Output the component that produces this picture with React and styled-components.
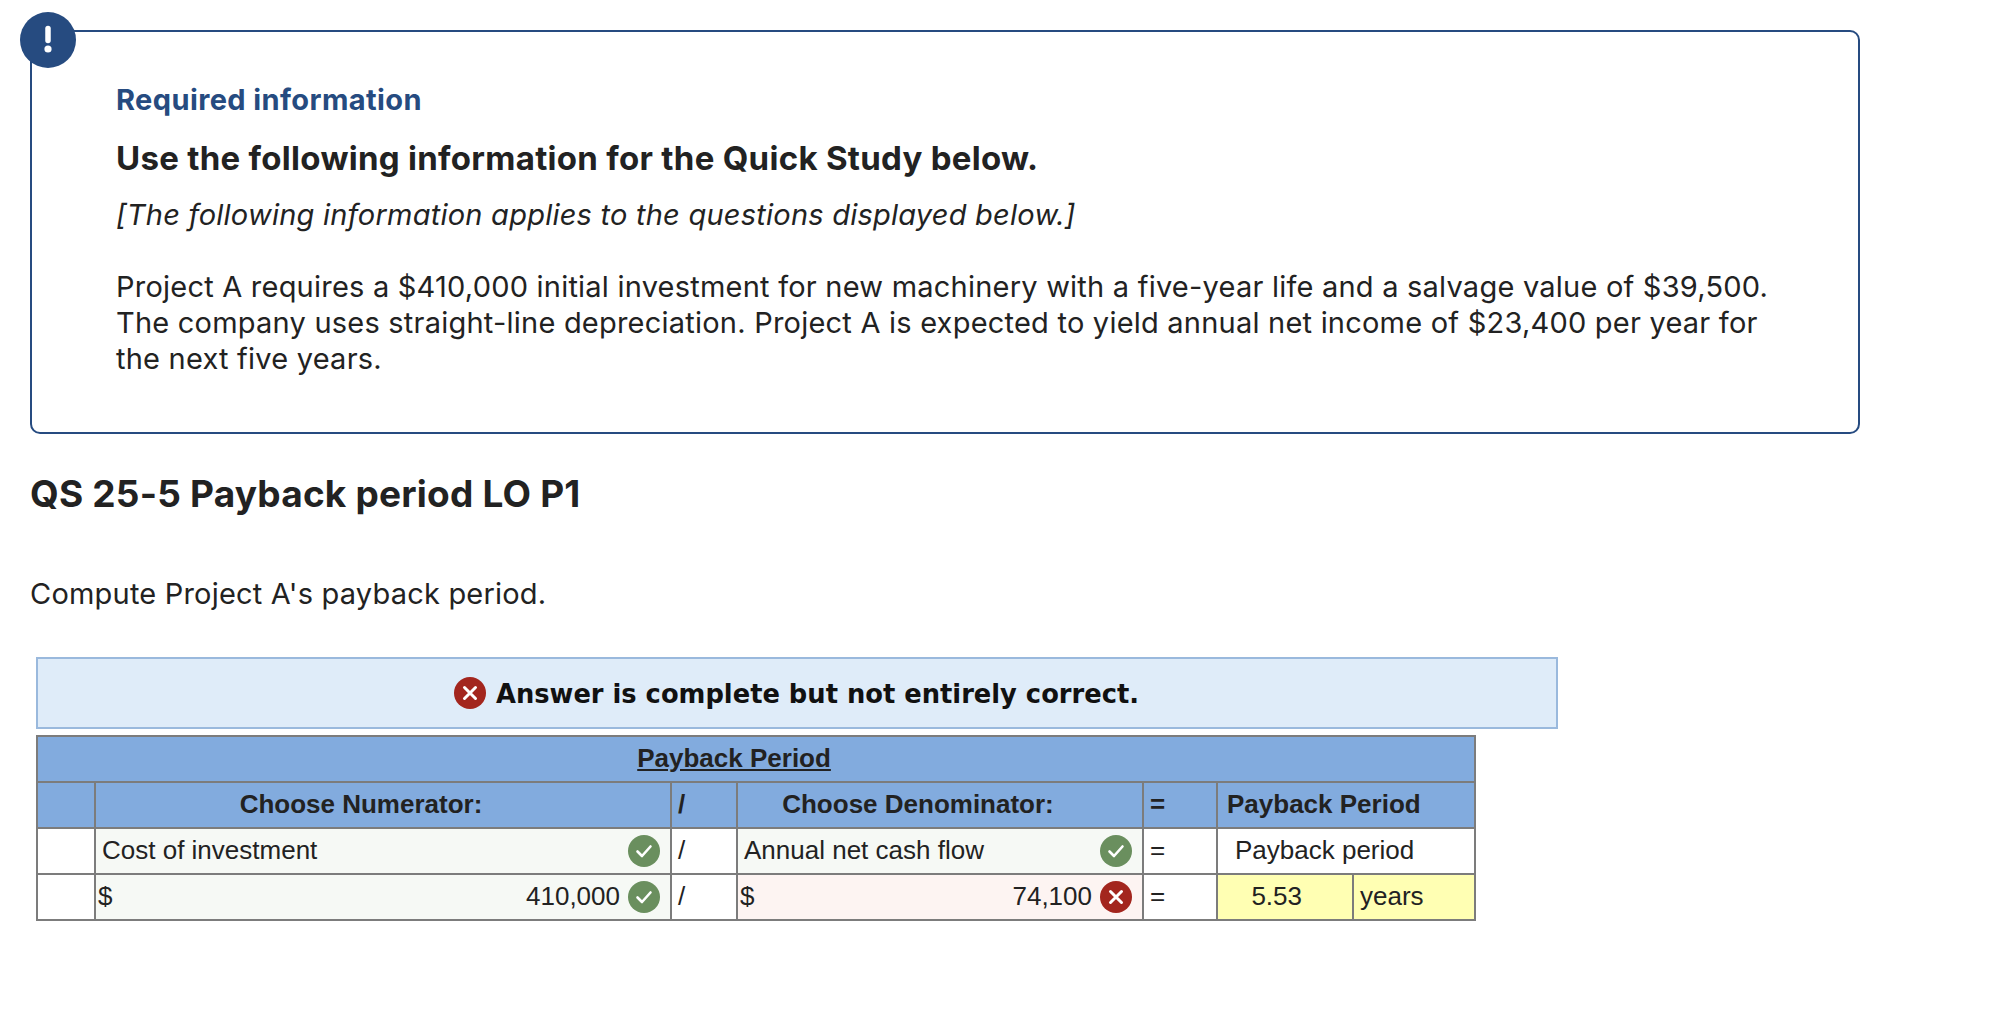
import React from "react";
import styled, { createGlobalStyle } from "styled-components";

const Global = createGlobalStyle`
  html, body { margin: 0; padding: 0; background: #fff; }
`;
const SANS = `"Inter", "Noto Sans", sans-serif`;
const ARIAL = `"Liberation Sans", Arial, sans-serif`;
const Page = styled.div`
  padding: 30px 0 0 30px;
  width: 1964px;
  height: 984px;
  color: #222;
  font-family: ${SANS};
`;
const InfoBox = styled.section`
  position: relative;
  box-sizing: border-box;
  width: 1830px;
  height: 404px;
  border: 2px solid #264b80;
  border-radius: 10px;
  padding: 50px 84px 0;
`;
const Badge = styled.div`
  position: absolute;
  left: -12px;
  top: -20px;
  width: 56px;
  height: 56px;
  border-radius: 50%;
  background: #264b80;
  display: flex;
  align-items: center;
  justify-content: center;
`;
const Required = styled.h3`
  margin: 0;
  font-size: 29px;
  line-height: 36px;
  font-weight: 700;
  letter-spacing: 0.4px;
  color: #264b80;
`;
const Use = styled.h2`
  margin: 22px 0 0;
  font-size: 33px;
  line-height: 36px;
  font-weight: 700;
  letter-spacing: 0.29px;
  color: #222;
`;
const Note = styled.p`
  margin: 21px 0 0;
  font-size: 29px;
  line-height: 36px;
  font-style: italic;
  letter-spacing: 0.23px;
`;
const Body = styled.p`
  margin: 36px 0 0;
  font-size: 29px;
  line-height: 36px;
  letter-spacing: 0.22px;
  width: 1680px;
`;
const Heading = styled.h1`
  margin: 38px 0 0;
  font-size: 37px;
  line-height: 44px;
  font-weight: 700;
  letter-spacing: 0.2px;
`;
const Prompt = styled.p`
  margin: 60px 0 0;
  font-size: 29px;
  line-height: 36px;
  letter-spacing: 0.2px;
`;
const Feedback = styled.div`
  box-sizing: border-box;
  margin: 45px 0 0 6px;
  width: 1522px;
  height: 72px;
  background: #dfecf9;
  border: 2px solid #9ab9dd;
  display: flex;
  align-items: center;
  justify-content: flex-start;
  padding-left: 416px;
  gap: 10px;
  font-family: "DejaVu Sans", Verdana, sans-serif;
  font-weight: 700;
  font-size: 25.75px;
  color: #111;
`;
const FeedbackText = styled.span`
  padding-top: 2px;
`;
const Table = styled.table`
  margin: 6px 0 0 6px;
  border-collapse: collapse;
  table-layout: fixed;
  width: 1438px;
  font-family: ${ARIAL};
  font-size: 26px;
  color: #222;
`;
const Cell = styled.td`
  box-sizing: border-box;
  height: 46px;
  padding: 0 ${(p) => p.$pr ?? 10}px 2px ${(p) => p.$pl ?? 6}px;
  border: 2px solid #7c7c7c;
  background: ${(p) => p.$bg || "#fff"};
  text-align: ${(p) => p.$align || "left"};
  white-space: nowrap;
`;
const Head = styled.th`
  box-sizing: border-box;
  height: 46px;
  padding: 0 ${(p) => p.$pr ?? 6}px 2px ${(p) => p.$pl ?? 6}px;
  border: 2px solid #7c7c7c;
  background: #82abde;
  font-weight: 700;
  text-align: ${(p) => p.$align || "center"};
  white-space: nowrap;
  text-decoration: ${(p) => (p.$under ? "underline" : "none")};
`;
const Fill = styled.div`
  display: flex;
  align-items: center;
  gap: 8px;
  margin-bottom: -2px;
`;
const Grow = styled.span`
  flex: 1;
  margin-bottom: 2px;
  text-align: ${(p) => p.$align || "left"};
`;

const Ok = () => (
  <svg width="32" height="32" viewBox="0 0 32 32">
    <circle cx="16" cy="16" r="16" fill="#6a8f5e" />
    <path d="M9.5 16.5l4.5 4.5 8.5-9.5" fill="none" stroke="#fff" strokeWidth="2.6" strokeLinecap="round" strokeLinejoin="round" />
  </svg>
);
const Bad = () => (
  <svg width="32" height="32" viewBox="0 0 32 32">
    <circle cx="16" cy="16" r="16" fill="#a3261e" />
    <path d="M10.5 10.5l11 11M21.5 10.5l-11 11" fill="none" stroke="#fff" strokeWidth="3" strokeLinecap="round" />
  </svg>
);
const Bang = () => (
  <svg width="12" height="30" viewBox="0 0 12 30">
    <path d="M6 3.5v12" stroke="#fff" strokeWidth="5.5" strokeLinecap="round" />
    <circle cx="6" cy="24" r="3.6" fill="#fff" />
  </svg>
);

const GREEN = "#f6f9f5";
const PINK = "#fdf4f2";
const YELLOW = "#ffffb3";

export default function App() {
  return (
    <Page>
      <Global />
      <InfoBox>
        <Badge><Bang /></Badge>
        <Required>Required information</Required>
        <Use>Use the following information for the Quick Study below.</Use>
        <Note>[The following information applies to the questions displayed below.]</Note>
        <Body>
          Project A requires a $410,000 initial investment for new machinery with a five-year life and a salvage value of $39,500. The company uses straight-line depreciation. Project A is expected to yield annual net income of $23,400 per year for the next five years.
        </Body>
      </InfoBox>
      <Heading>QS 25-5 Payback period LO P1</Heading>
      <Prompt>Compute Project A's payback period.</Prompt>
      <Feedback><Bad /><FeedbackText>Answer is complete but not entirely correct.</FeedbackText></Feedback>
      <Table>
        <colgroup>
          <col width="58" /><col width="576" /><col width="66" /><col width="406" /><col width="74" /><col width="136" /><col width="122" />
        </colgroup>
        <thead>
          <tr><Head colSpan={7} $under $pr={50}>Payback Period</Head></tr>
          <tr>
            <Head />
            <Head $pr={50}>Choose Numerator:</Head>
            <Head $align="left">/</Head>
            <Head $pr={50}>Choose Denominator:</Head>
            <Head $align="left">=</Head>
            <Head colSpan={2} $align="left" $pl={9}>Payback Period</Head>
          </tr>
        </thead>
        <tbody>
          <tr>
            <Cell />
            <Cell $bg={GREEN}><Fill><Grow>Cost of investment</Grow><Ok /></Fill></Cell>
            <Cell>/</Cell>
            <Cell $bg={GREEN}><Fill><Grow>Annual net cash flow</Grow><Ok /></Fill></Cell>
            <Cell>=</Cell>
            <Cell colSpan={2} $pl={17}>Payback period</Cell>
          </tr>
          <tr>
            <Cell />
            <Cell $bg={GREEN} $pl={2}><Fill><Grow>$</Grow><Grow $align="right">410,000</Grow><Ok /></Fill></Cell>
            <Cell>/</Cell>
            <Cell $bg={PINK} $pl={2}><Fill><Grow>$</Grow><Grow $align="right">74,100</Grow><Bad /></Fill></Cell>
            <Cell>=</Cell>
            <Cell $bg={YELLOW} $align="right" $pr={50}>5.53</Cell>
            <Cell $bg={YELLOW}>years</Cell>
          </tr>
        </tbody>
      </Table>
    </Page>
  );
}
